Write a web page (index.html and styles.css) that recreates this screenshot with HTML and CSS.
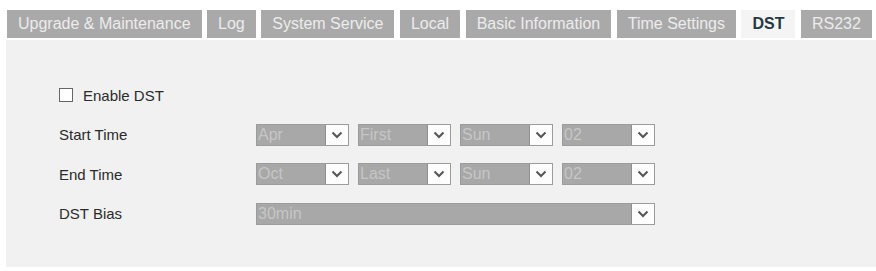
FILE: index.html
```html
<!DOCTYPE html>
<html lang="en">
<head>
  <meta charset="UTF-8">
  <title>DST</title>
  <link rel="stylesheet" href="styles.css">
</head>
<body>
  <div class="tabs">
    <div class="tab">Upgrade &amp; Maintenance</div>
    <div class="tab">Log</div>
    <div class="tab">System Service</div>
    <div class="tab">Local</div>
    <div class="tab">Basic Information</div>
    <div class="tab">Time Settings</div>
    <div class="tab active">DST</div>
    <div class="tab">RS232</div>
  </div>
  <div class="panel">
    <div class="row">
      <label class="check"><span class="box"></span>Enable DST</label>
    </div>
    <div class="row">
      <div class="label">Start Time</div>
      <div class="selects">
        <div class="select"><span class="val">Apr</span><span class="arrow"><svg width="12" height="8" viewBox="0 0 12 8"><path d="M1.5 1.5 L6 6 L10.5 1.5" fill="none" stroke="#555" stroke-width="2"/></svg></span></div>
        <div class="select"><span class="val">First</span><span class="arrow"><svg width="12" height="8" viewBox="0 0 12 8"><path d="M1.5 1.5 L6 6 L10.5 1.5" fill="none" stroke="#555" stroke-width="2"/></svg></span></div>
        <div class="select"><span class="val">Sun</span><span class="arrow"><svg width="12" height="8" viewBox="0 0 12 8"><path d="M1.5 1.5 L6 6 L10.5 1.5" fill="none" stroke="#555" stroke-width="2"/></svg></span></div>
        <div class="select"><span class="val">02</span><span class="arrow"><svg width="12" height="8" viewBox="0 0 12 8"><path d="M1.5 1.5 L6 6 L10.5 1.5" fill="none" stroke="#555" stroke-width="2"/></svg></span></div>
      </div>
    </div>
    <div class="row">
      <div class="label">End Time</div>
      <div class="selects">
        <div class="select"><span class="val">Oct</span><span class="arrow"><svg width="12" height="8" viewBox="0 0 12 8"><path d="M1.5 1.5 L6 6 L10.5 1.5" fill="none" stroke="#555" stroke-width="2"/></svg></span></div>
        <div class="select"><span class="val">Last</span><span class="arrow"><svg width="12" height="8" viewBox="0 0 12 8"><path d="M1.5 1.5 L6 6 L10.5 1.5" fill="none" stroke="#555" stroke-width="2"/></svg></span></div>
        <div class="select"><span class="val">Sun</span><span class="arrow"><svg width="12" height="8" viewBox="0 0 12 8"><path d="M1.5 1.5 L6 6 L10.5 1.5" fill="none" stroke="#555" stroke-width="2"/></svg></span></div>
        <div class="select"><span class="val">02</span><span class="arrow"><svg width="12" height="8" viewBox="0 0 12 8"><path d="M1.5 1.5 L6 6 L10.5 1.5" fill="none" stroke="#555" stroke-width="2"/></svg></span></div>
      </div>
    </div>
    <div class="row">
      <div class="label">DST Bias</div>
      <div class="select wide"><span class="val">30min</span><span class="arrow"><svg width="12" height="8" viewBox="0 0 12 8"><path d="M1.5 1.5 L6 6 L10.5 1.5" fill="none" stroke="#555" stroke-width="2"/></svg></span></div>
    </div>
  </div>
</body>
</html>
```

FILE: styles.css
```css
body {
  margin: 0;
  background: #fff;
  font-family: 'Liberation Sans', Arial, sans-serif;
  color: #333;
}
.tabs {
  display: flex;
  gap: 5.5px;
  padding: 10px 0 0 7px;
}
.tab {
  height: 28px;
  line-height: 28px;
  padding: 0 11px;
  background: #a9a9a9;
  color: #ececec;
  font-size: 16px;
  white-space: nowrap;
}
.tab.active {
  background: #f4f4f4;
  color: #263842;
  font-weight: bold;
}
.panel {
  margin: 2px 0 0 6px;
  height: 227px;
  box-sizing: border-box;
  padding: 44px 0 0 53px;
  background: #f1f1f1;
  display: flex;
  flex-direction: column;
  gap: 17.5px;
}
.row {
  display: flex;
  align-items: center;
  height: 22px;
}
.label {
  width: 197px;
  font-size: 15px;
  color: #2b2b2b;
}
.check {
  display: flex;
  align-items: center;
  font-size: 15px;
  color: #2b2b2b;
}
.box {
  width: 12px;
  height: 12px;
  border: 1px solid #666;
  background: #fff;
  margin: 0 10px 0 0;
}
.selects {
  display: flex;
  gap: 9px;
}
.select {
  width: 93px;
  height: 22px;
  box-sizing: border-box;
  display: flex;
  background: #a8a8a8;
  border: 1px solid #9c9c9c;
}
.select.wide {
  width: 399px;
}
.val {
  flex: 1;
  padding-left: 1px;
  font-size: 16px;
  line-height: 20px;
  color: #c6c6c6;
}
.arrow {
  width: 22px;
  background: #fdfdfd;
  border-left: 1px solid #8e8e8e;
  display: flex;
  align-items: center;
  justify-content: center;
}
```
